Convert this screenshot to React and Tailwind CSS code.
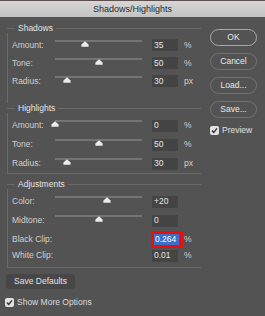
import React from "react";

const groups = [
  {
    title: "Shadows",
    rows: [
      { label: "Amount:", value: "35", unit: "%", pos: 0.35 },
      { label: "Tone:", value: "50", unit: "%", pos: 0.5 },
      { label: "Radius:", value: "30", unit: "px", pos: 0.14 },
    ],
  },
  {
    title: "Highlights",
    rows: [
      { label: "Amount:", value: "0", unit: "%", pos: 0 },
      { label: "Tone:", value: "50", unit: "%", pos: 0.5 },
      { label: "Radius:", value: "30", unit: "px", pos: 0.14 },
    ],
  },
];

const Thumb = ({ pos }) => (
  <svg
    width="8"
    height="6"
    viewBox="0 0 8 6"
    className="absolute top-[5px]"
    style={{ left: `${pos * 87 - 4}px` }}
  >
    <path d="M4 0.3 L7.6 3.6 V5.8 H0.4 V3.6 Z" fill="#ececec" />
  </svg>
);

const Row = ({ label, value, unit, pos, h = "h-[18px]", slider = true, selected = false }) => (
  <div className={`flex items-center ${h}`}>
    <span className="w-[43px] text-[#cfcfcf]">{label}</span>
    <div className="relative w-[87px] self-stretch">
      {slider && (
        <>
          <div className="absolute left-0 right-0 top-[4px] h-[2px] bg-[#747474]" />
          <Thumb pos={pos} />
        </>
      )}
    </div>
    <div className="relative ml-[10px] flex h-[12px] w-[26px] items-center bg-[#444444] pl-[2px] text-[#e4e4e4]">
      {selected ? (
        <>
          <span className="flex h-[11px] items-center bg-[#3d6fca] pl-[1px] pr-[3px] text-white">{value}</span>
          <div className="absolute -left-[1px] -right-[5px] -top-[2px] -bottom-[3px] border-[3px] border-[#e80f0f]" />
        </>
      ) : (
        value
      )}
    </div>
    {unit && <span className="ml-[6px] text-[#cfcfcf]">{unit}</span>}
  </div>
);

const Legend = ({ title }) => (
  <div className="flex h-[10px] items-center">
    <div className="h-px w-[8px] bg-[#6a6a6a]" />
    <span className="px-[3px] text-[#e2e2e2]">{title}</span>
    <div className="h-px flex-1 bg-[#6a6a6a]" />
  </div>
);

const Check = () => (
  <div className="flex h-[9px] w-[9px] items-center justify-center rounded-[2px] bg-[#e2e2e2]">
    <svg width="7" height="7" viewBox="0 0 7 7">
      <path d="M1 3.6 L2.8 5.4 L6 1.4" fill="none" stroke="#3a3a3a" strokeWidth="1.5" />
    </svg>
  </div>
);

const Btn = ({ children, primary }) => (
  <div
    className={`flex h-[17px] w-[47px] items-center justify-center rounded-full border text-[#e8e8e8] ${
      primary ? "border-[#a8a8a8]" : "border-[#737373]"
    }`}
  >
    {children}
  </div>
);

export default function App() {
  return (
    <div
      className="flex h-[316px] w-[265px] flex-col overflow-hidden bg-[#535353] text-[8.5px] leading-none"
      style={{ fontFamily: '"Liberation Sans", Arial, sans-serif' }}
    >
      <div className="flex h-[17px] items-center justify-center border-t border-[#5e4f4f] bg-gradient-to-b from-[#d6d6d6] to-[#c3c3c3] text-[9px] text-[#2b2b2b]">
        Shadows/Highlights
      </div>

      <div className="flex">
        <div className="w-[201px] pl-[7px]">
          <div className="mt-[6px]">
            <Legend title={groups[0].title} />
          </div>
          <div className="border-l border-[#6a6a6a] pb-[13px] pl-[4px] pt-[3px]">
            {groups[0].rows.map((r, i) => (
              <Row key={i} {...r} />
            ))}
          </div>

          <Legend title={groups[1].title} />
          <div className="border-b border-l border-[#6a6a6a] pl-[4px] pt-[3px]">
            {groups[1].rows.map((r, i) => (
              <Row key={i} {...r} h="h-[19px]" />
            ))}
          </div>

          <div className="mt-[5px]">
            <Legend title="Adjustments" />
          </div>
          <div className="border-b border-l border-[#6a6a6a] pb-[4px] pl-[4px] pt-[3px]">
            <Row label="Color:" value="+20" unit="" pos={0.6} h="h-[19px]" />
            <Row label="Midtone:" value="0" unit="" pos={0.5} h="h-[19px]" />
            <Row label="Black Clip:" value="0.264" unit="%" slider={false} selected h="h-[18px]" />
            <Row label="White Clip:" value="0.01" unit="%" slider={false} h="h-[15px]" />
          </div>
        </div>

        <div className="ml-[9px] flex flex-col pt-[12px]">
          <div className="flex flex-col gap-[7px]">
            <Btn primary>OK</Btn>
            <Btn>Cancel</Btn>
            <Btn>Load...</Btn>
            <Btn>Save...</Btn>
          </div>
          <div className="mt-[8px] flex items-center gap-[3px] text-[#e0e0e0]">
            <Check />
            <span>Preview</span>
          </div>
        </div>
      </div>

      <div className="ml-[6px] mt-[6px] flex h-[15px] w-[69px] items-center justify-center rounded-[3px] bg-[#474747] text-[#e2e2e2]">
        Save Defaults
      </div>
      <div className="ml-[5px] mt-[9px] flex items-center gap-[3px] text-[#dcdcdc]">
        <Check />
        <span>Show More Options</span>
      </div>
    </div>
  );
}
